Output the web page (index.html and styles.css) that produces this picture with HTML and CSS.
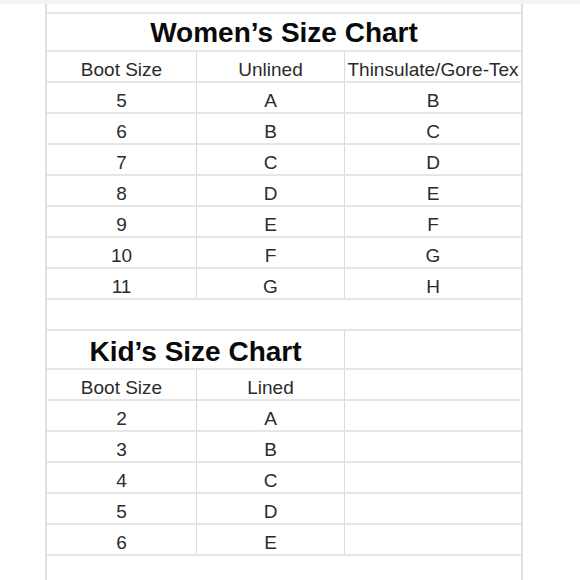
FILE: index.html
```html
<!DOCTYPE html>
<html lang="en">
<head>
<meta charset="utf-8">
<title>Size Chart</title>
<link rel="stylesheet" href="styles.css">
</head>
<body>
<div class="topband"></div>
<div class="sheet">
  <div class="grid">
    <div class="c title span3">Women’s Size Chart</div>

    <div class="c r">Boot Size</div><div class="c r">Unlined</div><div class="c">Thinsulate/Gore-Tex</div>
    <div class="c r">5</div><div class="c r">A</div><div class="c">B</div>
    <div class="c r">6</div><div class="c r">B</div><div class="c">C</div>
    <div class="c r">7</div><div class="c r">C</div><div class="c">D</div>
    <div class="c r">8</div><div class="c r">D</div><div class="c">E</div>
    <div class="c r">9</div><div class="c r">E</div><div class="c">F</div>
    <div class="c r">10</div><div class="c r">F</div><div class="c">G</div>
    <div class="c r">11</div><div class="c r">G</div><div class="c">H</div>

    <div class="c span3"></div>

    <div class="c title kid span2 r">Kid’s Size Chart</div><div class="c"></div>
    <div class="c r">Boot Size</div><div class="c r">Lined</div><div class="c"></div>
    <div class="c r">2</div><div class="c r">A</div><div class="c"></div>
    <div class="c r">3</div><div class="c r">B</div><div class="c"></div>
    <div class="c r">4</div><div class="c r">C</div><div class="c"></div>
    <div class="c r">5</div><div class="c r">D</div><div class="c"></div>
    <div class="c r">6</div><div class="c r">E</div><div class="c"></div>
  </div>
</div>
</body>
</html>
```

FILE: styles.css
```css
html, body {
  margin: 0;
  padding: 0;
  background: #ffffff;
  overflow: hidden;
}

.topband {
  height: 4px;
  background: #f3f3f3;
}

.sheet {
  margin-left: 45px;
  width: 478px;
  box-sizing: border-box;
  height: 590px;
  padding-top: 8px;
  border-left: 2px solid #e0e0e0;
  border-right: 2px solid #e0e0e0;
}

.grid {
  display: grid;
  grid-template-columns: 150px 148px 176px;
  grid-template-rows: 38px repeat(8, 31px) 31px 39px repeat(6, 31px);
  border-top: 2px solid #e6e6e6;
}

.c {
  box-sizing: border-box;
  display: flex;
  align-items: flex-end;
  justify-content: center;
  border-bottom: 2px solid #e6e6e6;
  font-family: "Liberation Sans", Arial, sans-serif;
  font-size: 19px;
  line-height: 1.15;
  color: #2b2b2b;
  white-space: nowrap;
}

.c.r {
  border-right: 1px solid #dadada;
}

.span3 {
  grid-column: 1 / -1;
}

.span2 {
  grid-column: 1 / 3;
}

.title {
  font-size: 28px;
  font-weight: bold;
  color: #0a0a0a;
  padding-bottom: 1px;
}

.title.kid {
  padding-bottom: 0;
}
```
